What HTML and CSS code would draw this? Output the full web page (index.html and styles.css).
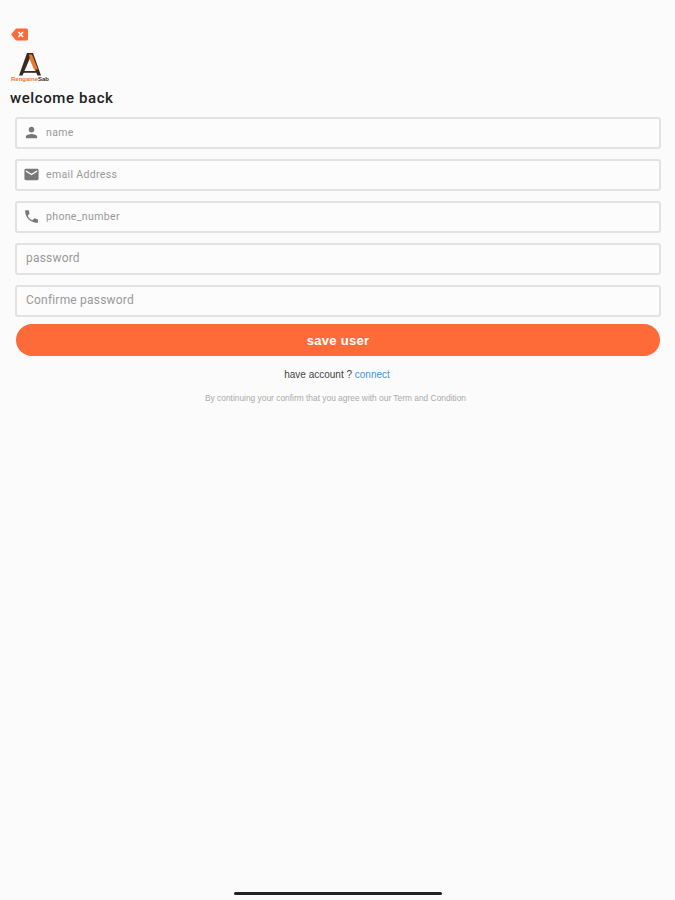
FILE: index.html
```html
<!DOCTYPE html>
<html lang="en">
<head>
    <meta charset="UTF-8">
    <meta name="viewport" content="width=device-width, initial-scale=1.0">
    <title>Sign up</title>
    <link rel="stylesheet" href="styles.css">
</head>
<body>
    <div class="screen">
        <div class="back-row">
            <svg class="back-icon" width="17" height="13" viewBox="0 0 17 13">
                <path d="M5 .5h10.500a1.500 1.500 0 0 1 1.500 1.500v9a1.500 1.500 0 0 1-1.500 1.500H5L0 6.500z" fill="#ff6a39"/>
                <path d="M7.500 4l4.500 5M12 4L7.500 9" stroke="#fff" stroke-width="1.600" fill="none"/>
            </svg>
        </div>

        <div class="logo">
            <svg width="24" height="23" viewBox="0 0 24 23">
                <path d="M9 0h6l8 22.500h-3.500L12 5 4.500 22.500H1z" fill="#3a2a20"/>
                <path d="M11 1.500h3l6 15h-4L12 7z" fill="#e8792f"/>
                <path d="M3 18h18v1.800H3z" fill="#3a2a20"/>
            </svg>
            <div class="logo-name"><span class="logo-orange">Rengaine</span>Sab</div>
        </div>

        <h1 class="title">welcome back</h1>

        <form class="signup-form">
            <div class="field">
                <svg class="field-icon" width="17" height="17" viewBox="0 0 24 24"><path d="M12 12c2.210 0 4-1.790 4-4s-1.790-4-4-4-4 1.790-4 4 1.790 4 4 4zm0 2c-2.670 0-8 1.340-8 4v2h16v-2c0-2.660-5.330-4-8-4z"/></svg>
                <span class="placeholder">name</span>
            </div>
            <div class="field">
                <svg class="field-icon" width="17" height="17" viewBox="0 0 24 24"><path d="M20 4H4c-1.100 0-2 .9-2 2v12c0 1.100.9 2 2 2h16c1.100 0 2-.9 2-2V6c0-1.100-.9-2-2-2zm0 4l-8 5-8-5V6l8 5 8-5v2z"/></svg>
                <span class="placeholder">email Address</span>
            </div>
            <div class="field">
                <svg class="field-icon" width="17" height="17" viewBox="0 0 24 24"><path d="M6.620 10.790c1.440 2.830 3.760 5.140 6.590 6.590l2.200-2.200c.27-.27.67-.36 1.020-.24 1.120.37 2.330.57 3.570.57.550 0 1 .45 1 1V20c0 .55-.45 1-1 1C10.610 21 3 13.390 3 4c0-.55.45-1 1-1h3.500c.55 0 1 .45 1 1 0 1.250.2 2.450.57 3.570.11.350.03.740-.25 1.020l-2.200 2.200z"/></svg>
                <span class="placeholder">phone_number</span>
            </div>
            <div class="field">
                <span class="placeholder large">password</span>
            </div>
            <div class="field">
                <span class="placeholder large">Confirme password</span>
            </div>
            <button class="save-btn" type="button">save user</button>
        </form>

        <p class="have-account">have account ? <a href="#">connect</a></p>
        <p class="terms">By continuing your confirm that you agree with our Term and Condition</p>

        <div class="home-bar"></div>
    </div>
</body>
</html>
```

FILE: styles.css
```css
* {
    box-sizing: border-box;
}

body {
    margin: 0;
    background-color: #fbfbfb;
    font-family: "Liberation Sans", Arial, sans-serif;
}

.screen {
    display: flex;
    flex-direction: column;
    height: 900px;
    padding: 28px 14px 0 10px;
}

.back-row {
    display: flex;
    height: 13px;
    padding-left: 1px;
}

.logo {
    display: flex;
    flex-direction: column;
    align-items: center;
    width: 40px;
    margin-top: 12px;
}

.logo-name {
    font-size: 6px;
    line-height: 6px;
    font-weight: bold;
    white-space: nowrap;
    color: #333;
}

.logo-orange {
    color: #e8792f;
}

.title {
    margin: 7px 0 0;
    font-family: Roboto, "Liberation Sans", sans-serif;
    font-size: 15px;
    line-height: 18px;
    font-weight: 500;
    letter-spacing: 0.6px;
    color: #222;
}

.signup-form {
    display: flex;
    flex-direction: column;
    gap: 10px;
    margin: 10px 0 0 5px;
}

.field {
    display: flex;
    align-items: center;
    height: 32px;
    padding: 0 0 2px 6px;
    background-color: #fcfcfc;
    border: 2px solid #e2e2e2;
    border-radius: 3px;
}

.field-icon {
    flex: none;
    fill: #777;
}

.placeholder {
    margin-left: 6px;
    font-family: Roboto, "Liberation Sans", sans-serif;
    font-size: 10.500px;
    letter-spacing: 0.35px;
    color: #999;
}

.placeholder.large {
    margin-left: 3px;
    font-size: 12px;
    letter-spacing: 0.2px;
}

.save-btn {
    height: 32px;
    margin: -3px 1px 0;
    background-color: #ff6a39;
    border: none;
    border-radius: 16px;
    color: white;
    font-family: "Liberation Sans", Arial, sans-serif;
    font-size: 13px;
    font-weight: bold;
    letter-spacing: 0.3px;
}

.have-account {
    margin: 13px 0 0;
    padding-left: 3px;
    text-align: center;
    font-size: 10px;
    line-height: 12px;
    color: #444;
}

.have-account a {
    color: #4a90d9;
    text-decoration: none;
}

.terms {
    margin: 11px 0 0;
    text-align: center;
    font-size: 8.400px;
    line-height: 12px;
    color: #aaa;
}

.home-bar {
    align-self: center;
    width: 208px;
    height: 3px;
    margin-top: auto;
    margin-bottom: 5px;
    margin-left: 4px;
    background-color: #222;
    border-radius: 2px;
}
```
